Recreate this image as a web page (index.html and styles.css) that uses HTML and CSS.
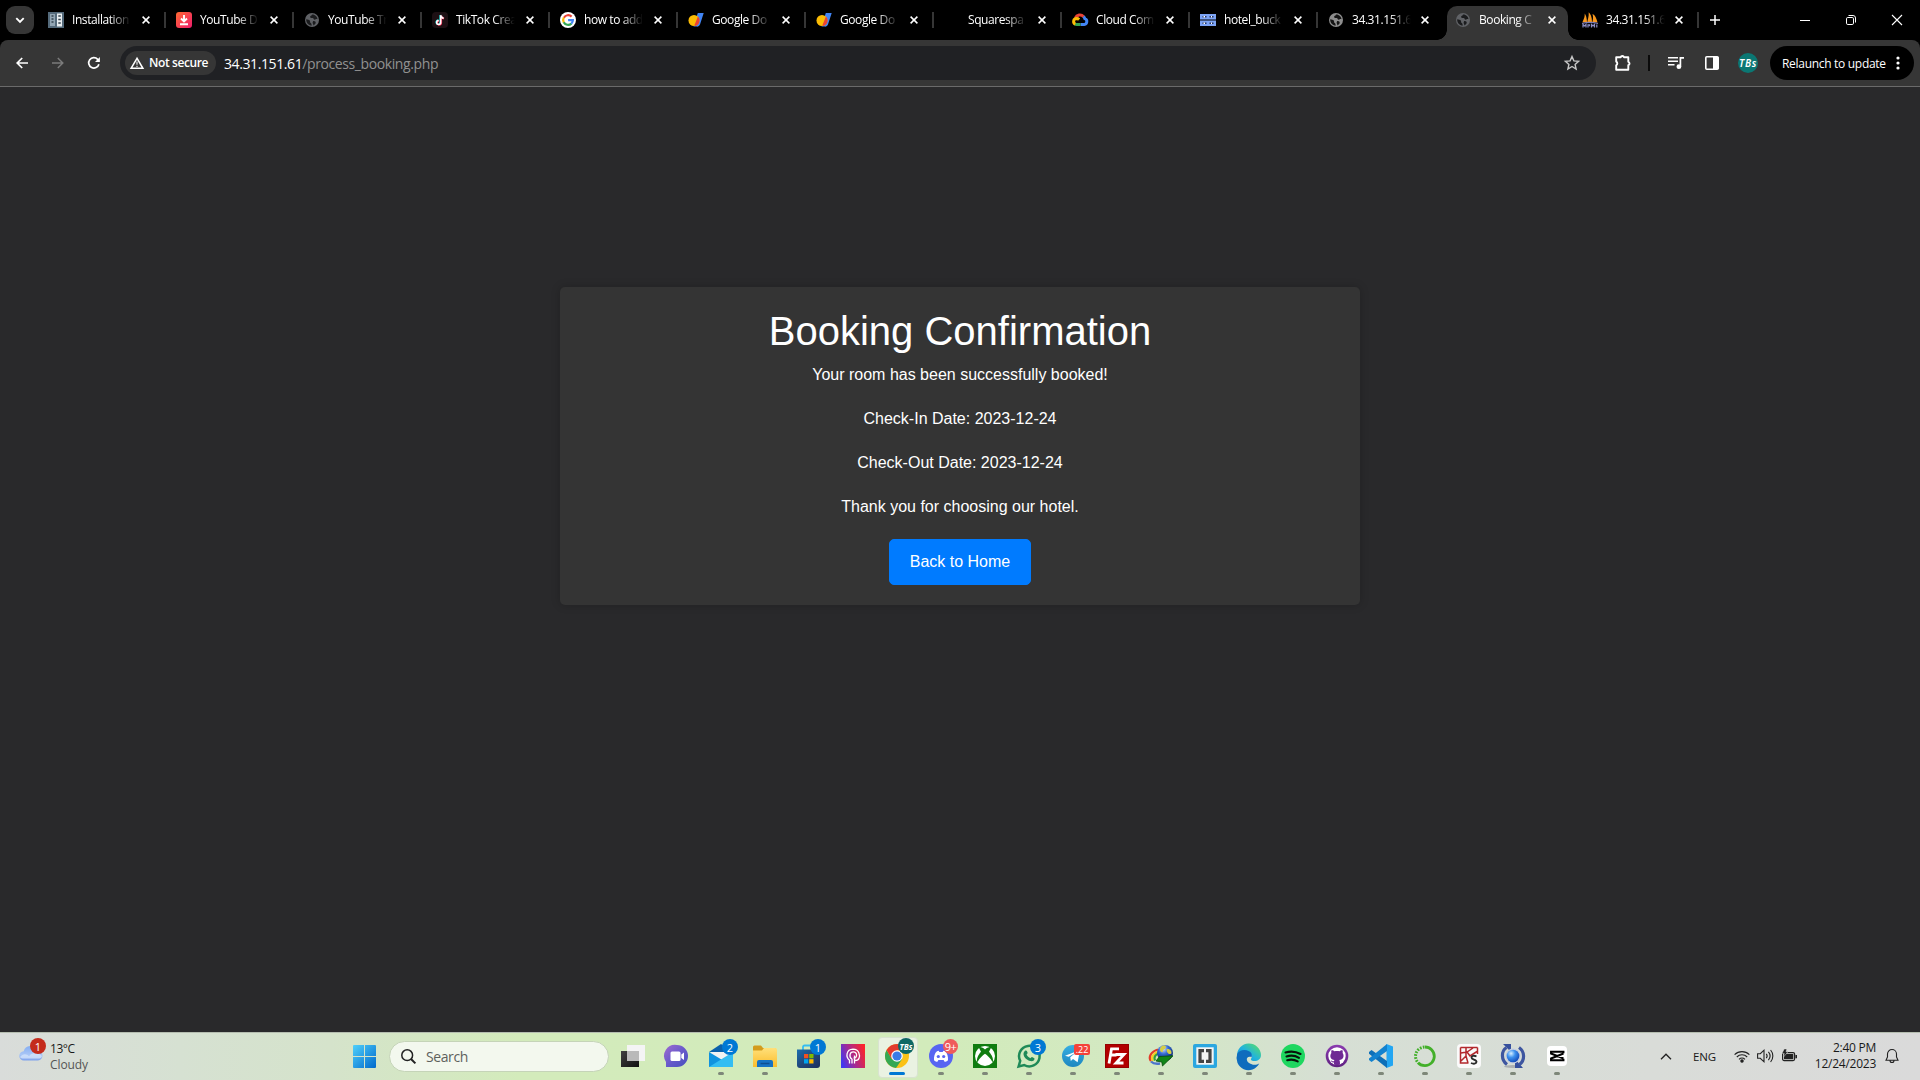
FILE: index.html
```html
<!DOCTYPE html>
<html lang="en">
<head>
<meta charset="utf-8">
<title>Booking Confirmation</title>
<link rel="stylesheet" href="styles.css">
</head>
<body>
<svg class="defs" aria-hidden="true">
  <defs>
    <linearGradient id="gWin" x1="0" y1="0" x2="1" y2="1"><stop offset="0" stop-color="#4fd0fb"/><stop offset="1" stop-color="#0069cc"/></linearGradient>
    <linearGradient id="gRed" x1="0" y1="0" x2="1" y2="1"><stop offset="0" stop-color="#ff6a32"/><stop offset="1" stop-color="#ee1c6c"/></linearGradient>
    <linearGradient id="gChat" x1="0" y1="0" x2="1" y2="1"><stop offset="0" stop-color="#a06bd0"/><stop offset=".5" stop-color="#6a5acb"/><stop offset="1" stop-color="#4650be"/></linearGradient>
    <linearGradient id="gFolder" x1="0" y1="0" x2="0" y2="1"><stop offset="0" stop-color="#ffe07a"/><stop offset="1" stop-color="#fbbd2c"/></linearGradient>
    <linearGradient id="gStore" x1="0" y1="0" x2="1" y2="1"><stop offset="0" stop-color="#1b6fae"/><stop offset=".5" stop-color="#20477c"/><stop offset="1" stop-color="#1b2f5c"/></linearGradient>
    <linearGradient id="gHead" x1="0" y1=".7" x2="1" y2=".3"><stop offset="0" stop-color="#4138f0"/><stop offset=".45" stop-color="#a52b92"/><stop offset="1" stop-color="#fb242b"/></linearGradient>
    <linearGradient id="gEdge" x1="0" y1="1" x2="1" y2="0"><stop offset="0" stop-color="#1187d8"/><stop offset=".5" stop-color="#21b4dc"/><stop offset="1" stop-color="#5fe25c"/></linearGradient>
    <linearGradient id="gTel" x1="0" y1="0" x2="0" y2="1"><stop offset="0" stop-color="#37aee2"/><stop offset="1" stop-color="#1e87c0"/></linearGradient>
    <linearGradient id="gDark" x1="0" y1="0" x2="1" y2="1"><stop offset="0" stop-color="#404040"/><stop offset="1" stop-color="#111"/></linearGradient>
    <linearGradient id="gGit" x1="0" y1="0" x2="0" y2="1"><stop offset="0" stop-color="#8b3bb0"/><stop offset="1" stop-color="#5f2181"/></linearGradient>
    <linearGradient id="gCloud" x1="0" y1="0" x2="0" y2="1"><stop offset="0" stop-color="#86aef2"/><stop offset=".6" stop-color="#a9c6f6"/><stop offset="1" stop-color="#7fa2ec"/></linearGradient>
    <radialGradient id="gOrb" cx=".35" cy=".3" r=".8"><stop offset="0" stop-color="#d7efff"/><stop offset=".4" stop-color="#3e92ef"/><stop offset="1" stop-color="#0b3fb0"/></radialGradient>
    <radialGradient id="gGlobe" cx=".4" cy=".25" r=".8"><stop offset="0" stop-color="#d6e5ff"/><stop offset=".4" stop-color="#3268d0"/><stop offset="1" stop-color="#071c66"/></radialGradient>
  </defs>
  <symbol id="globe" viewBox="0 0 16 16"><circle cx="8" cy="8" r="7" fill="currentColor"/><path d="M2.200 7.200c1.700.8 2.800.1 3.600 1.200.8.9-.3 1.900.8 2.300 1 .4.6 1.400 1.300 2.800C5 13.700 2 11.200 2.200 7.200zM8 2.500c-.4 1.600-2 1.200-1.900 2.500.2 1.200 1.700 1 2.700.9 1 .1.600 1.800 2 1.800 1 0 1.200-1.100 2.700-.4-.1-2.500-2.500-5-5.500-4.800zM9 9.300c1.500-.6 3 .4 2.700 1.800-.3 1-1.500 2.200-2.500 2.300.5-1.200-.7-1.700-.6-2.600z" fill="var(--land)"/></symbol>
  <symbol id="docs" viewBox="0 0 16 16"><path d="M9.800 1H15.700L12 12.600a3 3 0 0 1-3.200 2H5.500z" fill="#4285f4"/><circle cx="6" cy="8.500" r="5.500" fill="#fbbc04"/><path d="M9.900 4.600a5.500 5.500 0 0 1-3 9.300l-.5-.6z" fill="#ea4335"/></symbol>
  <symbol id="x" viewBox="0 0 8 8"><path d="M.6.6l6.800 6.800M7.400.6L.6 7.400" stroke="currentColor" stroke-width="1.500" fill="none"/></symbol>
</svg>

<header class="browser">
  <div class="tabstrip">
    <button class="tab-search"><svg width="10" height="7" viewBox="0 0 10 7"><path d="M1.300 1.200L5 4.900l3.700-3.700" fill="none" stroke="#fff" stroke-width="1.900"/></svg></button>
    <nav class="tabs">
      <div class="tab"><svg class="fav" viewBox="0 0 16 16"><path d="M0 0h16v16H0z" fill="#546a7b"/><path d="M2 2h5v12H2z" fill="#93a6b4"/><path d="M9 1.500h5v13H9z" fill="#e9eef1"/><path d="M3.500 4h2M3.500 7h2M3.500 10h2M10.300 4h2.500M10.300 7.500h2.500M10.300 11h2.500" stroke="#34434e" stroke-width="1.500"/></svg><span class="title">Installation</span><svg class="close"><use href="#x"/></svg></div>
      <div class="tab"><svg class="fav" viewBox="0 0 16 16"><rect width="16" height="16" rx="3" fill="url(#gRed)"/><path d="M8 3v6M5 6.500L8 9.500l3-3M4 12.200h8" stroke="#fff" stroke-width="1.900" fill="none"/></svg><span class="title">YouTube D</span><svg class="close"><use href="#x"/></svg></div>
      <div class="tab"><svg class="fav globe-dim"><use href="#globe"/></svg><span class="title">YouTube Tr</span><svg class="close"><use href="#x"/></svg></div>
      <div class="tab"><svg class="fav" viewBox="0 0 16 16"><rect width="16" height="16" rx="4" fill="#1d1014"/><path d="M8.300 3v7.200a2 2 0 1 1-2-2M8.300 3c.3 1.700 1.500 2.700 3 2.900" fill="none" stroke="#25f4ee" stroke-width="1.800"/><path d="M9.200 3.600v7.200a2 2 0 1 1-2-2M9.200 3.600c.3 1.700 1.300 2.700 2.900 2.900" fill="none" stroke="#fe2c55" stroke-width="1.800"/><path d="M8.700 3.200v7.400a2 2 0 1 1-2-2M8.700 3.300c.3 1.700 1.300 2.700 2.900 2.900" fill="none" stroke="#fff" stroke-width="1.500"/></svg><span class="title">TikTok Crea</span><svg class="close"><use href="#x"/></svg></div>
      <div class="tab"><svg class="fav" viewBox="0 0 16 16"><circle cx="8" cy="8" r="8" fill="#fff"/><g fill="none" stroke-width="2.200"><path d="M3.900 5.700a4.900 4.900 0 0 1 7.700-1.100" stroke="#ea4335"/><path d="M3.800 10.400a5 5 0 0 1 0-4.800" stroke="#fbbc05"/><path d="M11.400 11.600a5 5 0 0 1-7.700-1.400" stroke="#34a853"/><path d="M8.100 8.100h4.800a5 5 0 0 1-1.600 3.600" stroke="#4285f4"/></g></svg><span class="title">how to add</span><svg class="close"><use href="#x"/></svg></div>
      <div class="tab"><svg class="fav"><use href="#docs"/></svg><span class="title">Google Do</span><svg class="close"><use href="#x"/></svg></div>
      <div class="tab"><svg class="fav"><use href="#docs"/></svg><span class="title">Google Do</span><svg class="close"><use href="#x"/></svg></div>
      <div class="tab"><span class="fav"></span><span class="title">Squarespa</span><svg class="close"><use href="#x"/></svg></div>
      <div class="tab"><svg class="fav" viewBox="0 0 16 16"><g fill="none" stroke-width="3"><path d="M3.300 6A5 5 0 0 1 11.600 4.700" stroke="#ea4335"/><path d="M11.500 4.500a5 5 0 0 1 1.300 2.200 3 3 0 0 1-.6 5.800H8.500" stroke="#4285f4"/><path d="M8.500 12.500H4.800c-.9 0-1.500-.3-2-.7" stroke="#34a853"/><path d="M3.300 12.100C.8 10.800 1 6.700 4.700 6.600c1 0 1.800.4 2.400 1" stroke="#fbbc05"/></g></svg><span class="title">Cloud Com</span><svg class="close"><use href="#x"/></svg></div>
      <div class="tab"><svg class="fav" viewBox="0 0 16 16"><path d="M0 2h16v5.500H0zM0 8.500h16V14H0z" fill="#7da4f5"/><path d="M2.500 4.700h4M2.500 11.300h4M9.500 4.700h4M9.500 11.300h4" stroke="#26345f" stroke-width="1.600"/><path d="M3.500 4.700h1.500M3.500 11.300h1.500M11 4.700h1M11 11.300h1" stroke="#fff" stroke-width="1.600"/></svg><span class="title">hotel_buck</span><svg class="close"><use href="#x"/></svg></div>
      <div class="tab narrow nosep"><svg class="fav globe-light"><use href="#globe"/></svg><span class="title">34.31.151.6</span><svg class="close"><use href="#x"/></svg></div>
      <div class="tab narrow active"><svg class="fav globe-dim"><use href="#globe"/></svg><span class="title">Booking C</span><svg class="close"><use href="#x"/></svg></div>
      <div class="tab narrow"><svg class="fav" viewBox="0 0 16 16"><path d="M5 10C4.800 6 4 3 2.700 1.500 3 6 1 8 .5 10.500zM10 10C10 5 8.500 2 6.700.3 7 5 5.600 8 5.300 10zM15.500 10.500C14.500 6 13 3 10.500 2c1 3 .4 6-.1 8z" fill="#f8981d"/><path d="M0 11.500c5-1.300 11-1.300 16 0" stroke="#7779b5" stroke-width="1.200" fill="none"/><path d="M1 15.500v-3l1.500 1.500 1.500-1.500v3M6 15.500v-2.700h1.500v1.500M9.500 15.500v-3l1.500 1.500 1.500-1.500v3M14.800 15.500v-3" stroke="#8b8dc4" stroke-width="1.200" fill="none"/></svg><span class="title">34.31.151.6</span><svg class="close"><use href="#x"/></svg></div>
    </nav>
    <button class="new-tab"><svg width="10" height="10" viewBox="0 0 10 10"><path d="M5 0v10M0 5h10" stroke="#fff" stroke-width="1.500"/></svg></button>
    <div class="window-controls">
      <span><svg width="10" height="10"><path d="M0 5.500h10" stroke="#fff"/></svg></span>
      <span><svg width="10" height="10" viewBox="0 0 10 10" fill="none" stroke="#fff"><rect x=".5" y="2.500" width="7" height="7" rx="1.300"/><path d="M2.500.5H7A2.500 2.500 0 0 1 9.500 3v4.500"/></svg></span>
      <span><svg width="10" height="10" viewBox="0 0 10 10"><path d="M0 0l10 10M10 0L0 10" stroke="#fff" stroke-width="1.100"/></svg></span>
    </div>
  </div>

  <div class="toolbar">
    <div class="nav-buttons">
      <svg viewBox="0 0 12 12"><path d="M12 6H1.200M6.200 1L1.200 6l5 5" fill="none" stroke="#fff" stroke-width="1.700"/></svg>
      <svg viewBox="0 0 12 12"><path d="M0 6h10.800M5.800 1l5 5-5 5" fill="none" stroke="#7b7b7b" stroke-width="1.500"/></svg>
      <svg viewBox="0 0 12 12"><path d="M10.900 7.200A5.200 5.200 0 1 1 9.700 2.300L11 3.600" fill="none" stroke="#fff" stroke-width="1.700"/><path d="M11.900 0v5H7z" fill="#fff"/></svg>
    </div>
    <div class="omnibox">
      <span class="chip"><svg width="14" height="12" viewBox="0 0 14 12"><path d="M7 1.300L1.100 11.300h11.800z" fill="none" stroke="#fff" stroke-width="1.500"/><path d="M7 4.500v3.200M7 8.700v1.400" stroke="#ccc" stroke-width="1.400"/></svg><b>Not secure</b></span>
      <span class="url"><span class="host">34.31.151.61</span>/process_booking.php</span>
      <svg class="star" width="16" height="16" viewBox="0 0 16 16"><path d="M8 1.600l1.900 4.300 4.700.4-3.500 3.100 1 4.600L8 11.500 3.900 14l1-4.600L1.400 6.300l4.700-.4z" fill="none" stroke="#c7c7c7" stroke-width="1.400"/></svg>
    </div>
    <div class="actions">
      <svg class="ext" width="18" height="18" viewBox="0 0 18 18"><path d="M2.200 3.300h4.500a1.700 1.700 0 0 1 3.300 0h4.300v4.500a1.800 1.800 0 0 1 0 3.400v4.500H2.200v-4.400a2.100 2.100 0 0 0 0-3.700z" fill="none" stroke="#fff" stroke-width="1.900" stroke-linejoin="round"/></svg>
      <i class="divider"></i>
      <svg class="media" width="16" height="14" viewBox="0 0 16 14"><path d="M0 1.800h10M0 5.300h10M0 8.800h6.500" stroke="#fff" stroke-width="1.600"/><path d="M12.400 10.500V1.800H16" stroke="#fff" stroke-width="1.700" fill="none"/><circle cx="10.900" cy="10.700" r="2.400" fill="#fff"/></svg>
      <svg class="panel" width="14" height="14" viewBox="0 0 14 14"><rect x=".8" y=".8" width="12.400" height="12.400" rx="1" fill="none" stroke="#fff" stroke-width="1.600"/><path d="M8 1h5.500v12H8z" fill="#fff"/></svg>
      <span class="avatar">TBs</span>
      <button class="relaunch"><span>Relaunch to update</span><svg width="4" height="14" viewBox="0 0 4 14" fill="#fff"><circle cx="2" cy="2" r="1.600"/><circle cx="2" cy="7" r="1.600"/><circle cx="2" cy="12" r="1.600"/></svg></button>
    </div>
  </div>
</header>

<main class="page">
  <section class="card">
    <h1>Booking Confirmation</h1>
    <p>Your room has been successfully booked!</p>
    <p>Check-In Date: 2023-12-24</p>
    <p>Check-Out Date: 2023-12-24</p>
    <p>Thank you for choosing our hotel.</p>
    <a class="btn">Back to Home</a>
  </section>
</main>

<footer class="taskbar">
  <div class="weather">
    <span class="cloud"><svg width="24" height="16" viewBox="0 0 24 16"><path d="M5 15.500a4.600 4.600 0 0 1-.3-9.200A7 7 0 0 1 18 5.500a5 5 0 0 1 1 10z" fill="url(#gCloud)"/><path d="M1 12c3-4 7-3 9-1 3-4 9-4 13 0-.4 2-2 2.600-4 2.600H5c-2 0-3.300-.4-4-1.600z" fill="#d6e5fc" opacity=".75"/></svg><i class="alert">1</i></span>
    <span class="temps"><span>13°C</span><span class="muted">Cloudy</span></span>
  </div>
  <div class="center">
    <svg class="start" width="23" height="23" viewBox="0 0 23 23"><path d="M0 1a1 1 0 0 1 1-1h10v11H0zM12 0h10a1 1 0 0 1 1 1v10H12zM0 12h11v11H1a1 1 0 0 1-1-1zM12 12h11v10a1 1 0 0 1-1 1H12z" fill="url(#gWin)"/></svg>
    <div class="search"><svg width="15" height="15" viewBox="0 0 15 15"><circle cx="6.200" cy="6.200" r="5.400" fill="none" stroke="#222" stroke-width="1.500"/><path d="M10 10l4.400 4.400" stroke="#222" stroke-width="2"/></svg><span>Search</span></div>
    <div class="apps">
      <div class="app"><svg viewBox="0 0 24 24"><path d="M0 7h18v16H0z" fill="url(#gDark)"/><path d="M6 1h18v16H6z" fill="#f4f4f4"/><path d="M6 7h12v10H6z" fill="#b9b9b9"/></svg></div>
      <div class="app"><svg viewBox="0 0 24 24"><path d="M12 1a11 11 0 1 1 0 22H1v-5A11 11 0 0 1 12 1z" fill="url(#gChat)"/><rect x="5.500" y="7.500" width="10" height="9.500" rx="1.500" fill="#fff"/><path d="M16.300 10.500l2.700-2v7.600l-2.700-2z" fill="#fff"/></svg></div>
      <div class="app on"><svg viewBox="0 0 24 24"><path d="M0 8L12 0l12 8z" fill="#0b60ab"/><path d="M2 8h20v8H2z" fill="#f3f3f3"/><path d="M0 8l12 7.200L24 23H0z" fill="#1193df"/><path d="M24 8L0 23h24z" fill="#35bdf2"/></svg><i class="badge">2</i></div>
      <div class="app on"><svg viewBox="0 0 24 24"><path d="M0 3a1.500 1.500 0 0 1 1.500-1.500H8L10 4h13v5H0z" fill="#d39b1c"/><path d="M0 6.500h9l2-2.500h11.500A1.500 1.500 0 0 1 24 5.500V23H0z" fill="url(#gFolder)"/><path d="M4 23v-5a2 2 0 0 1 2-2h12a2 2 0 0 1 2 2v5z" fill="#1672c4"/><path d="M7.500 19.500h9" stroke="#0d4f93" stroke-width="1.500"/></svg></div>
      <div class="app"><svg viewBox="0 0 24 24"><path d="M6 6V3a1.500 1.500 0 0 1 1.500-1.500h8A1.500 1.500 0 0 1 17 3v3" fill="none" stroke="#35bdf2" stroke-width="1.800"/><path d="M0 5.500h23V21a3 3 0 0 1-3 3H3a3 3 0 0 1-3-3z" fill="url(#gStore)"/><path d="M7 10h4.300v4.300H7z" fill="#f25022"/><path d="M12.200 10h4.300v4.300h-4.300z" fill="#7fba00"/><path d="M7 15.200h4.300v4.300H7z" fill="#00a4ef"/><path d="M12.200 15.200h4.300v4.300h-4.300z" fill="#ffb900"/></svg><i class="badge">1</i></div>
      <div class="app"><svg viewBox="0 0 24 24"><path d="M0 0h24v24H0z" fill="url(#gHead)"/><path d="M8.500 19.500v-3.300c-4-3-3.500-10.700 3.500-11 6.500.2 7 6.500 6 9-.6 2-2.200 2.300-4 2.300M11 19.500v-4.200c-3.500-2.500-2.200-7.500 1.300-7.500 3.700 0 4 4.200 2.400 5.700-.7.600-1.500.6-2.200.2M13.500 19.500v-8" fill="none" stroke="#fff" stroke-width="1.300"/></svg></div>
      <div class="app current"><svg viewBox="0 0 24 24"><circle cx="12" cy="12" r="12" fill="#fbc116"/><path d="M1.600 6A12 12 0 0 0 11 24l6.200-9H6.800z" fill="#34a853"/><path d="M1.600 6L6.800 15 12 6.200h10.500A12 12 0 0 0 1.600 6z" fill="#e33b2e"/><circle cx="12" cy="12" r="5.800" fill="#fff"/><circle cx="12" cy="12" r="4.600" fill="#397be6"/></svg><i class="profile">TBs</i></div>
      <div class="app on"><svg viewBox="0 0 24 24"><circle cx="12" cy="12" r="12" fill="#5865f2"/><path d="M8 7.200l1.700-.4.600 1.100h3.400l.6-1.100 1.700.4c2.200 1.500 3.300 5.300 3 9-1.200 1-2.400 1.500-3.400 1.500l-1-1.600H9.400l-1 1.600c-1 0-2.200-.5-3.400-1.500-.3-3.700.8-7.500 3-9z" fill="#fff"/><circle cx="9.300" cy="12.500" r="1.600" fill="#5865f2"/><circle cx="14.700" cy="12.500" r="1.600" fill="#5865f2"/></svg><i class="badge coral">9+</i></div>
      <div class="app on"><svg viewBox="0 0 24 24"><path d="M0 0h24v24H0z" fill="#107c10"/><circle cx="12" cy="12" r="10" fill="#fff"/><path d="M12 5.500c1.500-1.500 4.500-3 6.300-2.200L16 7.700c3 3.200 5 8 3.600 10.600C17.500 14 14 11 12 9.700 10 11 6.500 14 4.400 18.300 3 15.700 5 10.900 8 7.700L5.700 3.300C7.500 2.500 10.500 4 12 5.500z" fill="#107c10"/></svg></div>
      <div class="app on"><svg viewBox="0 0 24 24"><path d="M1.600 22.500l1.600-5.700A10.300 10.300 0 1 1 7.200 21z" fill="none" stroke="#1f8a58" stroke-width="2.500"/><path d="M8 6.800c.8-.6 1.500-.5 1.900.3l.8 2c-.3.800-.8 1-1.100 1.500.8 1.700 2.100 2.900 3.900 3.600.5-.4.900-1.300 1.500-1.200l2.400 1.200c.6 2.300-2 3.400-3.900 2.900-3.900-1-6.700-4-7-6.900-.1-1.400.6-2.600 1.500-3.400z" fill="#1f8a58"/></svg><i class="badge">3</i></div>
      <div class="app on"><svg viewBox="0 0 24 24"><circle cx="12" cy="12" r="11" fill="url(#gTel)"/><path d="M4 11.700L19 6l-2.400 12.200-4.600-3.300-2.200 2.200-.6-3.800 6-5-7.500 4.400z" fill="#fff"/></svg><i class="count">.22</i></div>
      <div class="app on"><svg viewBox="0 0 24 24"><path d="M0 0h24v24H0z" fill="#b20000"/><path d="M.5.500h23v23H.5z" fill="none" stroke="#7b0000" stroke-dasharray="1 1"/><path d="M4 19.500L6.500 4.800h7.500M5.500 11h6M10.500 10.500h8.500L11 19h7.500" fill="none" stroke="#fff" stroke-width="2.800"/></svg></div>
      <div class="app on"><svg viewBox="0 0 24 24"><g fill="none" stroke-width="2.300"><path d="M9 5.500C2 7.500-1 13 2 17" stroke="#e33b29"/><path d="M9.500 7.500C4.500 9 1.500 13.500 4 17" stroke="#f8cd25"/><path d="M10 9.500c-4 1-5.500 4-4 7" stroke="#32a13a"/><path d="M2 17.500c3 3 6 2.500 9 2" stroke="#4d75cc"/></g><circle cx="16" cy="9" r="8" fill="url(#gGlobe)"/><path d="M13 2c4-1.500 5 1 3 2.700-1 1-3 1-2 3.300-2.600.7-4.600-3-1-6zM18 5c3-.5 5 2 4.400 4.500C20 11.500 17 8 18 5z" fill="#d5ce45"/><path d="M10.500 12.500L24 11.800 13.500 22l-.7-4L7 17z" fill="#108516" stroke="#064b0b" stroke-width=".8"/></svg></div>
      <div class="app on"><svg viewBox="0 0 24 24"><rect width="24" height="24" rx="2" fill="#2ba7e0"/><path d="M3.300 3.300h17.400v17.400H3.300z" fill="#f5f5f5"/><path d="M11 6.700H7v10.600h4M13 6.700h4v10.600h-4" fill="none" stroke="#444" stroke-width="3.200"/></svg></div>
      <div class="app on"><svg viewBox="0 0 24 24"><path d="M0 12A12 12 0 0 1 24 11c0 4-3.200 6-6.500 6-3.500 0-4.200-1.500-3-3 1.300-2-.2-5-4-5-5 0-8.500 4.500-6 9.500z" fill="url(#gEdge)"/><path d="M.2 10C2 6 8 5 12 7.200c3 1.500 3.300 4.300 2.500 6-6-2-7 5.800 1.500 7.500 2.700.3 4.500-.2 6.200-1.200A12 12 0 0 1 .2 10z" fill="#0f6cbd"/></svg></div>
      <div class="app on"><svg viewBox="0 0 24 24"><circle cx="12" cy="12" r="12" fill="#1ed760"/><path d="M4.500 8.500c5-1.500 10.500-1 15 1.500M5.500 12.500c4-1.300 9-.8 12.500 1.300M6.200 16.200c3.500-1 7.300-.7 10.500 1.200" fill="none" stroke="#08140b" stroke-width="2.100" stroke-linecap="round"/></svg></div>
      <div class="app on"><svg viewBox="0 0 24 24"><circle cx="12" cy="12" r="11.300" fill="url(#gGit)"/><circle cx="12" cy="12" r="8.700" fill="#fff"/><path d="M6.500 6.200c1.300-.2 2.300.4 3 1 1.700-.4 3.500-.4 5 0 .7-.6 1.700-1.200 3-1 .4 1 .4 2 .1 2.700 2 2.800.8 6.700-3.300 7.200.6.800.7 2 .7 4.400-2 .7-4 .7-6 0v-2c-1.600.3-2.500-.3-3.300-1.900 1.200 0 1.700 1 3.200.7.100-.6.300-.9.600-1.200-4-.5-5.200-4.400-3.100-7.200-.3-.8-.3-1.700.1-2.700z" fill="#6f2994"/></svg></div>
      <div class="app on"><svg viewBox="0 0 24 24"><path d="M17.500 0L24 2.500v19L17.500 24z" fill="#23a6f2"/><path d="M0 8l2.500-2L18 17v7L0 9.700z" fill="#0d6fb8"/><path d="M0 16l2.500 2L18 7V0L0 14.500z" fill="#1282cf"/></svg></div>
      <div class="app on"><svg viewBox="0 0 24 24"><path d="M12 3a9.300 9.300 0 0 1 0 18.600c-3 0-5.500-1-7-3" fill="none" stroke="#43b02a" stroke-width="2.800"/><path d="M11.500 3A9.300 9.300 0 0 0 5 18.600" fill="none" stroke="#43b02a" stroke-width="3" stroke-dasharray="1.700 1.300"/></svg></div>
      <div class="app on"><svg viewBox="0 0 24 24"><rect width="24" height="24" rx="4" fill="#fafafa"/><path d="M3.500 3.500h17M3.500 3.500v15.500h8M4 9l6-1 6-4M10 8l3 4 7-4.500M4 17l5-5V3.500M9 12l2 7M20.500 3.500V10" fill="none" stroke="#b3282d" stroke-width="1.500"/><path d="M19.500 12.300c-3-1-5-.4-5 1.300 0 2.500 5 1.500 5 4.200 0 2-3 2.400-5.500 1.200" fill="none" stroke="#2b2b2b" stroke-width="1.900"/></svg></div>
      <div class="app on"><svg viewBox="0 0 24 24"><ellipse cx="12" cy="22.500" rx="9" ry="1.500" fill="#8d9199" opacity=".6"/><path d="M6 20.500C0 16 0 7 5.500 3.500M18 3.500c6 4 6 13 .5 17" fill="none" stroke="#3e56a0" stroke-width="3.200"/><path d="M2 0h8v8zM14 24h8l-8-9z" fill="#36509d"/><circle cx="12" cy="12" r="7.500" fill="#c3cce2"/><circle cx="12" cy="12" r="6.300" fill="url(#gOrb)"/></svg></div>
      <div class="app on"><svg viewBox="0 0 24 24"><rect x="2" y="2" width="20" height="20" rx="4" fill="#fff"/><path d="M18.500 9.300V7.800H6v1.700l12.500 5M18.500 14.700v1.500H6v-1.700l12.500-5" fill="none" stroke="#000" stroke-width="1.900"/></svg></div>
    </div>
  </div>
  <div class="tray">
    <svg class="chev" width="12" height="7" viewBox="0 0 12 7"><path d="M1 6.200l5-5 5 5" fill="none" stroke="#222" stroke-width="1.300"/></svg>
    <span class="lang">ENG</span>
    <div class="status">
      <svg width="16" height="13" viewBox="0 0 16 13" fill="none" stroke="#222" stroke-width="1.100"><path d="M.6 4.700a10.400 10.400 0 0 1 14.800 0M2.800 7a7.300 7.300 0 0 1 10.400 0M5 9.300a4.300 4.300 0 0 1 6 0"/><circle cx="8" cy="11" r="1.200" fill="#222"/></svg>
      <svg width="17" height="14" viewBox="0 0 17 14" fill="none" stroke="#222" stroke-width="1.100"><path d="M.6 4.700h2.700L7 1.200v11.600L3.300 9.300H.6zM9.300 4.800c1 1.300 1 3.100 0 4.400M11.400 2.900c2 2.400 2 5.800 0 8.200M13.600 1c3 3.500 3 8.500 0 12"/></svg>
      <svg width="16" height="14" viewBox="0 0 16 14"><rect x="1.600" y="3.600" width="12" height="8" rx="1.500" fill="none" stroke="#222" stroke-width="1.200"/><path d="M3 5h9.300v5.200H3zM14.400 6H16v3.200h-1.600z" fill="#222"/><path d="M3.200 0h2.600L5 2.800h2L2.500 8l.7-3.600H1z" fill="#222" stroke="#dadcda" stroke-width=".5"/></svg>
    </div>
    <div class="clock"><span>2:40 PM</span><span>12/24/2023</span></div>
    <svg class="bell" width="14" height="16" viewBox="0 0 14 16" fill="none" stroke="#222" stroke-width="1.100"><path d="M1 12.300L2.500 9V6a4.500 4.500 0 0 1 9 0v3l1.500 3.300zM5 12.500a2 2 0 0 0 4 0"/></svg>
  </div>
</footer>
</body>
</html>
```
FILE: styles.css
```css
* { box-sizing: border-box; }
html, body { height: 100%; margin: 0; }
body {
  display: flex;
  flex-direction: column;
  height: 1080px;
  overflow: hidden;
  background: #29292b;
  font-family: "Open Sans", "Noto Sans", sans-serif;
}
svg { display: block; flex: none; overflow: visible; }
i { font-style: normal; }
button { border: 0; padding: 0; font: inherit; color: inherit; }
.defs { position: absolute; width: 0; height: 0; }

/* Browser chrome */
.browser { flex: none; background: #000; color: #fff; }
.tabstrip { display: flex; height: 40px; align-items: center; }
.tab-search {
  display: flex; align-items: center; justify-content: center;
  width: 28px; height: 28px; margin: 0 4px 0 6px;
  border-radius: 9px; background: #363636;
}
.tabs { display: flex; height: 34px; align-self: flex-end; }
.tab {
  display: flex; align-items: center;
  width: 128px; height: 34px; padding: 0 16px 6px 10px;
  background: linear-gradient(#363636, #363636) no-repeat right 0 top 6px / 2px 16px;
}
.tab.narrow { width: 127px; }
.tab.nosep { background: none; }
.fav { width: 16px; height: 16px; flex: none; margin-right: 8px; }
.globe-dim { color: #606266; --land: #1b1c1e; }
.globe-light { color: #8e8e8e; --land: #151515; }
.title {
  width: 60px; white-space: nowrap;
  font-size: 12px; line-height: 18px; letter-spacing: -0.42px;
  -webkit-mask-image: linear-gradient(90deg, #000 62%, transparent 98%);
  mask-image: linear-gradient(90deg, #000 62%, transparent 98%);
}
.close { width: 8px; height: 8px; margin-left: auto; }
.tab.active {
  position: relative;
  background: #363636; border-radius: 10px 10px 0 0;
  width: 121px; margin: 0 4px 0 2px; padding: 0 12px 6px 8px;
}
.tab.active::before, .tab.active::after {
  content: ""; position: absolute; bottom: 0; width: 10px; height: 10px;
}
.tab.active::before { left: -10px; background: radial-gradient(circle at 0 0, transparent 9.500px, #363636 10px); }
.tab.active::after { right: -10px; background: radial-gradient(circle at 100% 0, transparent 9.500px, #363636 10px); }
.new-tab { display: flex; margin-left: 11px; background: none; }
.window-controls { display: flex; margin-left: auto; }
.window-controls span { display: flex; justify-content: center; width: 46px; }

.toolbar {
  display: flex; align-items: center;
  height: 47px; padding: 0 6px 0 16px;
  background: #363636; border-bottom: 1px solid #6a6a6a;
  border-radius: 8px 8px 0 0;
}
.nav-buttons { display: flex; gap: 24px; width: 104px; }
.nav-buttons svg { width: 12px; height: 12px; }
.omnibox {
  display: flex; align-items: center;
  width: 1476px; height: 34px; padding: 0 16px 0 5px;
  border-radius: 17px; background: #202124;
}
.chip {
  display: flex; align-items: center; gap: 5px;
  width: 91px; height: 24px; padding-left: 5px;
  border-radius: 12px; background: #363636;
}
.chip b { font-size: 12px; font-weight: 600; letter-spacing: -0.4px; white-space: nowrap; line-height: 18px; }
.url { margin-left: 8px; font-size: 14px; letter-spacing: -0.4px; color: #919191; white-space: nowrap; }
.host { color: #fff; }
.star { margin-left: auto; }
.actions { display: flex; align-items: center; }
.ext { margin-left: 18px; }
.divider { width: 2px; height: 16px; margin: 0 18px 0 16px; background: #0b0b0b; }
.panel { margin: 0 19px 0 21px; }
.avatar {
  display: flex; align-items: center; justify-content: center;
  width: 20px; height: 20px; margin-right: 12px;
  border-radius: 50%; background: #0b7773; white-space: nowrap;
  font: italic 600 10px "Noto Sans", sans-serif; letter-spacing: 0.7px;
}
.relaunch {
  display: flex; align-items: center; justify-content: space-between;
  width: 144px; height: 34px; padding: 0 14px 0 12px;
  border-radius: 17px; background: #000; white-space: nowrap;
  font-size: 12px; letter-spacing: -0.3px;
}

/* Booking page */
.page { flex: 1; padding-top: 200px; background: #29292b; }
.card {
  width: 800px; height: 318px; margin: 0 auto; padding: 20px;
  border-radius: 5px; background: #343434; color: #fff;
  box-shadow: 0 0 10px rgba(0, 0, 0, 0.2);
  font-family: "Liberation Sans", Arial, sans-serif;
  font-size: 16px; line-height: 24px; text-align: center;
}
.card h1 { margin: 0 0 8px; font-size: 40px; font-weight: 500; line-height: 48px; }
.card p { margin: 0 0 20px; }
.btn {
  display: inline-block; padding: 10px 20px;
  border: 1px solid #007bff; border-radius: 5px; background: #007bff;
}

/* Taskbar */
.taskbar {
  flex: none; display: flex; height: 48px; padding-bottom: 1px;
  border-top: 1px solid #b5bdb0;
  background: linear-gradient(90deg, #d9dcda 0, #d6e1d2 180px, #d5e3cb 330px, #d3ebbb 520px, #d2ebbb 950px, #d3e8c3 1150px, #d6dfd4 1330px, #d9dcd8 1650px, #dadada 1920px);
  color: #191919;
}
.weather { display: flex; width: 353px; padding-left: 19px; }
.cloud { position: relative; width: 24px; margin-right: 7px; padding-top: 12px; }
.alert, .badge, .count, .profile {
  position: absolute; display: flex; align-items: center; justify-content: center;
  border-radius: 8px; color: #fff; font-size: 11px; line-height: 1; white-space: nowrap;
}
.alert { width: 16px; height: 16px; left: 11px; top: 5px; background: #c42b1c; }
.temps { padding-top: 8px; font-size: 12px; line-height: 16px; letter-spacing: -0.45px; }
.temps span { display: block; }
.temps .muted { color: #555; letter-spacing: -0.1px; }
.center { display: flex; align-items: center; }
.search {
  display: flex; align-items: center; gap: 10px;
  width: 220px; height: 31px; margin: 0 1px 0 13px; padding-left: 11px;
  border: 1px solid #c5d4b8; border-radius: 16px; background: #f3f8ee;
  color: #5e615c; font-size: 14px; letter-spacing: -0.4px;
}
.apps { display: flex; }
.app {
  position: relative; display: flex; align-items: center; justify-content: center;
  width: 44px; height: 46px;
}
.app:first-child { margin-left: 1px; }
.app svg { width: 24px; height: 24px; }
.app.on::after, .app.current::after {
  content: ""; position: absolute; left: 19px; top: 39px;
  width: 6px; height: 3px; border-radius: 2px; background: #7e8779;
}
.app.current::after { left: 14px; width: 16px; background: #0078d4; }
.app.current::before {
  content: ""; position: absolute; left: 3px; top: 4px; width: 38px; height: 39px;
  border: 1px solid #d8e3d0; border-radius: 4px; background: #eaf2e2;
}
.app.current svg { position: relative; }
.badge { min-width: 16px; height: 16px; left: 23px; top: 6px; background: #0078d4; }
.badge.coral { width: 15px; height: 15px; min-width: 0; left: 24px; background: #ef5b5b; letter-spacing: -0.6px; }
.count { left: 23px; top: 11px; width: 16px; height: 11px; border-radius: 2px; background: #f4423a; font-size: 9px; }
.profile {
  left: 23px; top: 5px; width: 16px; height: 16px; background: #0d6765;
  font: italic 700 8px "Noto Sans", sans-serif;
}
.tray { display: flex; align-items: center; margin-left: auto; padding-right: 21px; }
.lang { width: 24px; margin: 1px 0 0 21px; font-size: 11.500px; letter-spacing: -0.2px; }
.status { display: flex; align-items: center; gap: 7px; margin-left: 17px; }
.clock { width: 72px; margin: 0 9px 0 7px; text-align: right; font-size: 12px; line-height: 16px; letter-spacing: -0.25px; }
.clock span { display: block; white-space: nowrap; }
```
